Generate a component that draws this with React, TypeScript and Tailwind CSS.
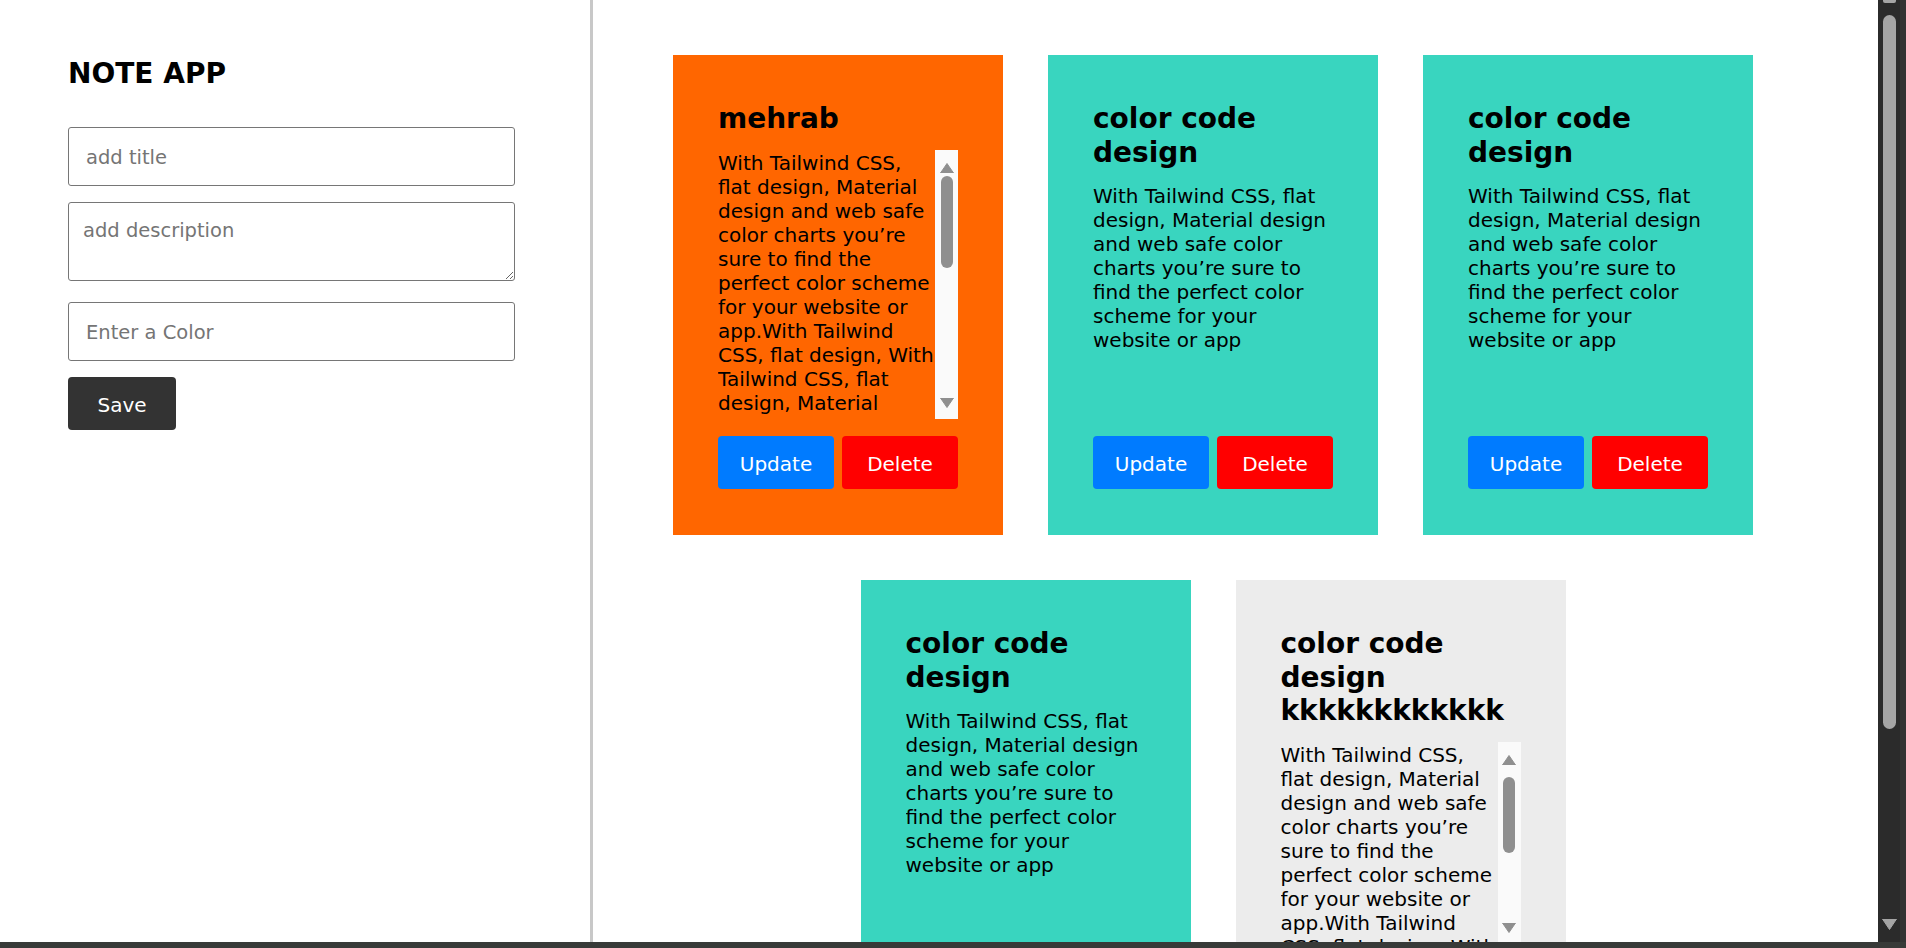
import React from "react";

const LONG =
  "With Tailwind CSS, flat design, Material design and web safe color charts you’re sure to find the perfect color scheme for your website or app.With Tailwind CSS, flat design, With Tailwind CSS, flat design, Material design and web safe color charts you’re sure to find the perfect color scheme for your website or app";
const SHORT =
  "With Tailwind CSS, flat design, Material design and web safe color charts you’re sure to find the perfect color scheme for your website or app";

function Tri({ up, color, w, h }: { up?: boolean; color: string; w: number; h: number }) {
  return (
    <svg width={w} height={h} viewBox={`0 0 ${w} ${h}`} className="block shrink-0">
      {up ? (
        <path d={`M${w / 2} 0.5 L${w - 0.5} ${h} L0.5 ${h} Z`} fill={color} strokeLinejoin="round" stroke={color} strokeWidth="1" />
      ) : (
        <path d={`M0.5 0 L${w - 0.5} 0 L${w / 2} ${h - 0.5} Z`} fill={color} strokeLinejoin="round" stroke={color} strokeWidth="1" />
      )}
    </svg>
  );
}

function InnerScrollbar({ thumbTop, thumbH }: { thumbTop: number; thumbH: number }) {
  return (
    <div className="flex w-[23px] shrink-0 flex-col items-center bg-[#fafafa] pb-[11px] pt-[13px]">
      <Tri up color="#8f8f8f" w={14} h={10} />
      <div className="w-[12px] shrink-0 rounded-full bg-[#8f8f8f]" style={{ marginTop: thumbTop - 23, height: thumbH }} />
      <div className="flex-1" />
      <Tri color="#8f8f8f" w={14} h={10} />
    </div>
  );
}

type CardProps = {
  title: string;
  desc: string;
  bg: string;
  scroll?: { top: number; h: number };
};

function Card({ title, desc, bg, scroll }: CardProps) {
  return (
    <div className={`flex h-[480px] w-[330px] shrink-0 flex-col px-[45px] pb-[46px] pt-[47px] ${bg}`}>
      <h2 className="mb-[14px] text-[28px] font-bold leading-[33.5px] text-black">{title}</h2>
      <div className="mb-[17px] flex min-h-0 flex-1">
        <p className="min-w-0 flex-1 overflow-hidden pt-[1px] text-[20px] leading-[24px] text-black">{desc}</p>
        {scroll && <InnerScrollbar thumbTop={scroll.top} thumbH={scroll.h} />}
      </div>
      <div className="flex shrink-0 gap-[8px]">
        <button className="h-[53px] w-[116px] rounded-[4px] bg-[#007bff] pt-[3px] text-[20px] text-white">Update</button>
        <button className="h-[53px] w-[116px] rounded-[4px] bg-[#ff0000] pt-[3px] text-[20px] text-white">Delete</button>
      </div>
    </div>
  );
}

export default function App() {
  return (
    <div className="flex h-[948px] w-[1906px] flex-col overflow-hidden bg-white font-['DejaVu_Sans',sans-serif] text-black">
      <div className="flex min-h-0 flex-1">
        <aside className="w-[593px] shrink-0 border-r-[3px] border-[#c8c8c8] pl-[68px] pt-[57px]">
          <h1 className="text-[28px] font-bold leading-[33.5px]">NOTE APP</h1>
          <form className="mt-[36.5px] flex w-[447px] flex-col" onSubmit={(e) => e.preventDefault()}>
            <input
              className="h-[59px] rounded-[3px] border border-[#767676] bg-white pl-[17px] pt-[2px] text-[19.5px] outline-none placeholder:text-[#757575]"
              placeholder="add title"
            />
            <textarea
              className="mt-[16px] h-[79px] rounded-[3px] border border-[#767676] bg-white px-[14px] pt-[17px] text-[19.5px] leading-[22px] outline-none placeholder:text-[#757575]"
              placeholder="add description"
            />
            <input
              className="mt-[21px] h-[59px] rounded-[3px] border border-[#767676] bg-white pl-[17px] pt-[2px] text-[19.5px] outline-none placeholder:text-[#757575]"
              placeholder="Enter a Color"
            />
            <button type="submit" className="mt-[16px] h-[53px] w-[108px] rounded-[4px] bg-[#333333] pt-[3px] text-[20px] text-white">
              Save
            </button>
          </form>
        </aside>

        <main className="flex min-w-0 flex-1 flex-wrap content-start justify-center gap-[45px] overflow-hidden pr-[45px] pt-[55px]">
          <Card title="mehrab" desc={LONG} bg="bg-[#ff6600]" scroll={{ top: 26, h: 92 }} />
          <Card title="color code design" desc={SHORT} bg="bg-[#39d5bf]" />
          <Card title="color code design" desc={SHORT} bg="bg-[#39d5bf]" />
          <Card title="color code design" desc={SHORT} bg="bg-[#39d5bf]" />
          <Card title="color code design kkkkkkkkkkkk" desc={LONG} bg="bg-[#ececec]" scroll={{ top: 35, h: 76 }} />
        </main>

        <div className="flex w-[28px] shrink-0">
          <div className="flex w-[22px] flex-col items-center bg-[#2b2b2b] pb-[12px]">
            <div className="h-[3px] w-[13px] rounded-b-[2px] bg-[#a5a5a5]" />
            <div className="mt-[12px] h-[714px] w-[13px] rounded-full bg-[#a5a5a5]" />
            <div className="flex-1" />
            <Tri color="#a5a5a5" w={15} h={11} />
          </div>
          <div className="w-[6px] bg-[#333333]" />
        </div>
      </div>
      <div className="h-[6px] shrink-0 bg-[#383a38]" />
    </div>
  );
}
